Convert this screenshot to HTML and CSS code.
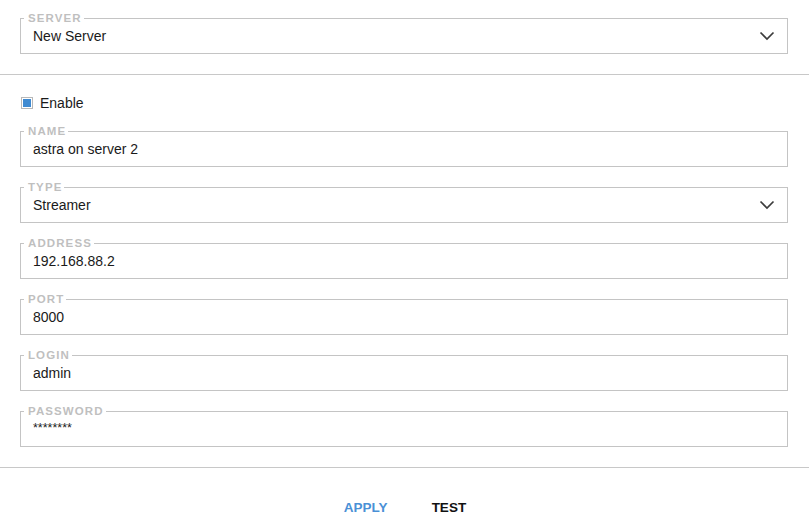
FILE: index.html
```html
<!DOCTYPE html>
<html>
<head>
<meta charset="utf-8">
<link rel="stylesheet" href="styles.css">
</head>
<body>
<div class="section top">
  <fieldset class="field">
    <legend>Server</legend>
    <div class="value select"><span>New Server</span><svg class="chev" width="16" height="16" viewBox="0 0 16 16"><path d="M1.5 4.5 L8 11 L14.5 4.5" fill="none" stroke="#3c3c3c" stroke-width="1.7"/></svg></div>
  </fieldset>
</div>
<div class="divider"></div>
<div class="section form">
  <label class="check"><span class="box"><span class="fill"></span></span>Enable</label>
  <fieldset class="field">
    <legend>Name</legend>
    <div class="value">astra on server 2</div>
  </fieldset>
  <fieldset class="field">
    <legend>Type</legend>
    <div class="value select"><span>Streamer</span><svg class="chev" width="16" height="16" viewBox="0 0 16 16"><path d="M1.5 4.5 L8 11 L14.5 4.5" fill="none" stroke="#3c3c3c" stroke-width="1.7"/></svg></div>
  </fieldset>
  <fieldset class="field">
    <legend>Address</legend>
    <div class="value">192.168.88.2</div>
  </fieldset>
  <fieldset class="field">
    <legend>Port</legend>
    <div class="value">8000</div>
  </fieldset>
  <fieldset class="field">
    <legend>Login</legend>
    <div class="value">admin</div>
  </fieldset>
  <fieldset class="field">
    <legend>Password</legend>
    <div class="value pass">********</div>
  </fieldset>
</div>
<div class="divider"></div>
<div class="actions">
  <span class="btn apply">APPLY</span>
  <span class="btn test">TEST</span>
</div>
</body>
</html>
```
FILE: styles.css
```css
html, body {
  margin: 0;
  padding: 0;
  background: #fff;
  font-family: "Liberation Sans", Arial, sans-serif;
  color: #1a1a1a;
}
.section {
  padding: 0 21px 0 20px;
}
.top {
  padding-top: 12px;
  padding-bottom: 20px;
}
.form {
  padding-top: 20px;
  padding-bottom: 20px;
  display: flex;
  flex-direction: column;
  gap: 14px;
}
.divider {
  height: 1px;
  background: #c8c8c8;
}
.field {
  margin: 0;
  border: 1px solid #c4c4c4;
  padding: 4px 12px 9px 12px;
  min-width: 0;
}
.field legend {
  margin-left: -9px;
  padding: 0 2px 0 4px;
  font-size: 11.5px;
  line-height: 12px;
  font-weight: bold;
  letter-spacing: 1.1px;
  text-transform: uppercase;
  color: #bfbfbf;
}
.value {
  font-size: 14px;
  line-height: 16px;
  height: 16px;
}
.select {
  display: flex;
  justify-content: space-between;
  align-items: center;
}
.chev {
  display: block;
}
.pass {
  font-size: 12.5px;
  letter-spacing: 0;
  line-height: 14px;
}
.check {
  display: flex;
  align-items: center;
  gap: 7px;
  font-size: 14px;
  line-height: 16px;
  height: 16px;
  padding-left: 1px;
}
.box {
  width: 10px;
  height: 10px;
  border: 1px solid #b8b8b8;
  display: flex;
  align-items: center;
  justify-content: center;
  background: #fff;
}
.fill {
  width: 8px;
  height: 8px;
  background: #3f8ad1;
}
.actions {
  display: flex;
  justify-content: center;
  gap: 44px;
  padding-top: 32px;
  padding-left: 1px;
}
.btn {
  font-size: 13.5px;
  line-height: 16px;
  font-weight: bold;
}
.apply {
  color: #4a90d6;
}
.test {
  color: #111;
}
```
